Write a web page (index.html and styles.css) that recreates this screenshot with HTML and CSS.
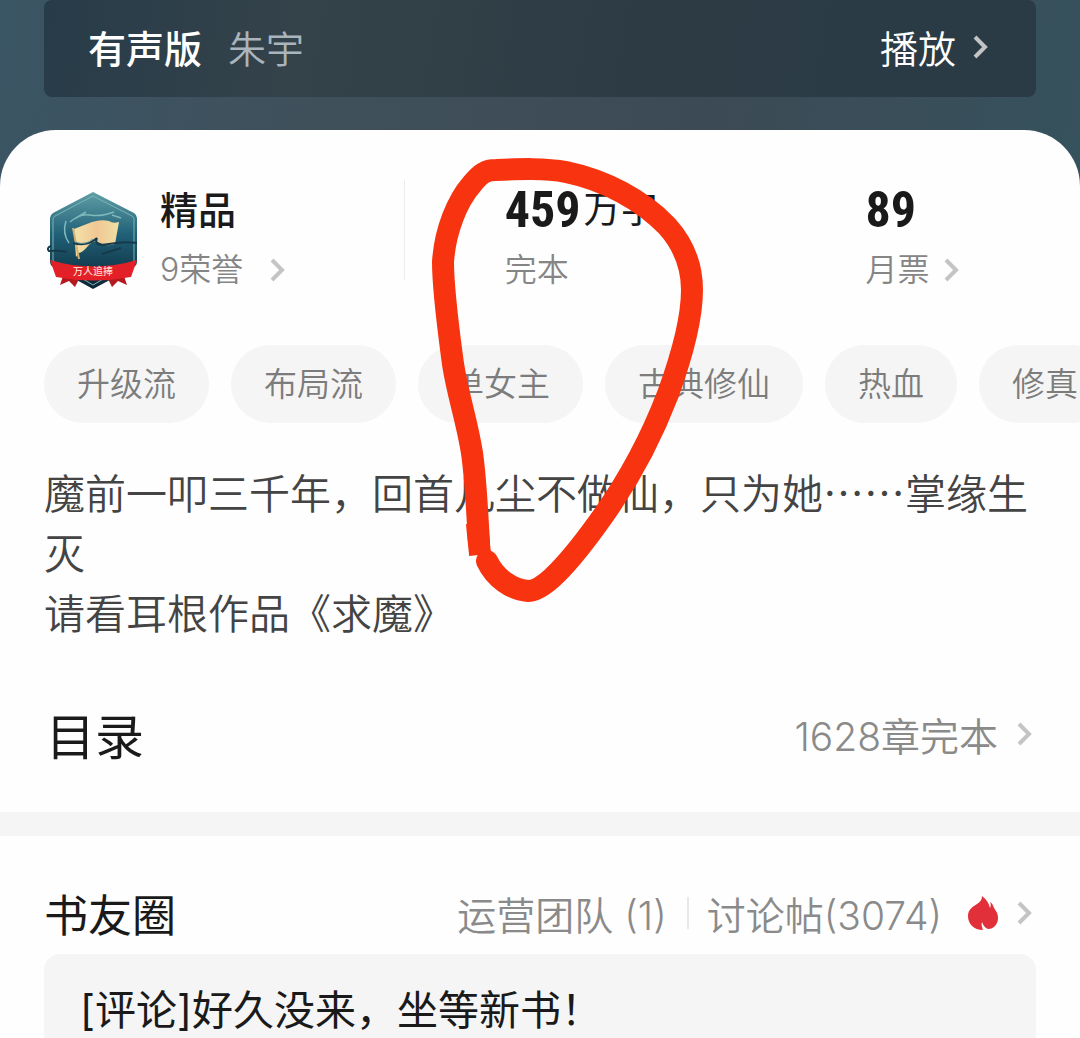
FILE: index.html
```html
<!DOCTYPE html>
<html lang="zh-CN">
<head>
  <meta charset="UTF-8" />
  <meta name="viewport" content="width=device-width, initial-scale=1" />
  <title>求魔</title>
  <link rel="stylesheet" href="styles.css">
</head>
<body>
  <header class="hero">
    <div class="audio-bar">
      <span class="audio-title">有声版</span>
      <span class="audio-author">朱宇</span>
      <a href="#play" class="audio-play">播放
        <svg class="chevron" viewBox="0 0 16 26"><path d="M3 3l10 10L3 23" /></svg>
      </a>
    </div>
  </header>

  <main class="panel">
    <section class="stats">
      <a href="#honor" class="stat honor">
        <svg class="badge" viewBox="-2 0 94 100">
          <defs>
            <linearGradient id="shield" x1="0" y1="0" x2="0" y2="1">
              <stop offset="0" stop-color="#5f9fa6" />
              <stop offset="0.45" stop-color="#1f5f76" />
              <stop offset="1" stop-color="#0c2534" />
            </linearGradient>
            <linearGradient id="flag" x1="0" y1="0" x2="1" y2="0">
              <stop offset="0" stop-color="#f3e3a8" />
              <stop offset="0.5" stop-color="#f0c795" />
              <stop offset="1" stop-color="#efe0a2" />
            </linearGradient>
          </defs>
          <path d="M47 1l41 21q3 2 3 5v44q0 3-3 5L47 98 7 76q-3-2-3-5V27q0-3 3-5z" fill="url(#shield)" />
          <path d="M47 5l39 20q2 1 2 3v42L47 94 7 70V28q0-2 2-3z" fill="none" stroke="#7fb3b5" stroke-width="1" />
          <path d="M24 31q10-9 20-7t24-3M20 30q-4 12 3 22M30 27l10-6M66 24l9 3" fill="none" stroke="#7fb9bc" stroke-width="1.5" />
          <path d="M28 38l18-7q9-3 17-1 4 3 10 1l-4 22q-9 3-15-1t-12 3-9 7l-3 4z" fill="url(#flag)" />
          <path d="M27 37l6 31" stroke="#d3b274" stroke-width="2" />
          <path d="M21 61q-8-2-18-1-3-3 2-5M27 52q14 4 24-5-4 9 12 6t28-1M56 63l19-6" fill="none" stroke="#173a4b" stroke-width="2" />
          <path d="M29 51q11 4 18-3" fill="none" stroke="#5f9499" stroke-width="1" />
          <path d="M19 79l-5 15 9-4 6 6 6-12zM76 79l5 15-9-4-6 6-6-12z" fill="#b51920" />
          <path d="M4 69q43 13 87 0l-6 17q-38 7-75 0z" fill="#e32027" />
          <text class="badge-text" x="47" y="84" text-anchor="middle">万人追捧</text>
        </svg>
        <span class="honor-text">
          <strong class="honor-name">精品</strong>
          <span class="stat-label">9荣誉
            <svg class="chevron" viewBox="0 0 16 26"><path d="M3 3l10 10L3 23" /></svg>
          </span>
        </span>
      </a>
      <div class="stat">
        <div class="stat-value"><b class="stat-number">459</b>万字</div>
        <div class="stat-label">完本</div>
      </div>
      <a href="#ticket" class="stat">
        <div class="stat-value"><b class="stat-number">89</b></div>
        <div class="stat-label ticket">月票
          <svg class="chevron" viewBox="0 0 16 26"><path d="M3 3l10 10L3 23" /></svg>
        </div>
      </a>
    </section>

    <nav class="tags">
      <a href="#tag1" class="tag">升级流</a>
      <a href="#tag2" class="tag">布局流</a>
      <a href="#tag3" class="tag">单女主</a>
      <a href="#tag4" class="tag">古典修仙</a>
      <a href="#tag5" class="tag">热血</a>
      <a href="#tag6" class="tag">修真</a>
    </nav>

    <p class="intro">魔前一叩三千年，回首凡尘不做仙，只为她……掌缘生灭<br>请看耳根作品《求魔》</p>

    <section class="catalog">
      <h2 class="catalog-title">目录</h2>
      <a href="#catalog" class="more">1628章完本
        <svg class="chevron" viewBox="0 0 16 26"><path d="M3 3l10 10L3 23" /></svg>
      </a>
    </section>

    <section class="circle">
      <div class="circle-head">
        <h2 class="circle-title">书友圈</h2>
        <div class="circle-links">
          <a href="#team" class="more">运营团队 (1)</a>
          <a href="#posts" class="more posts">讨论帖(3074)
            <svg class="fire" viewBox="0 0 30 34"><path d="M14 0c4 3 7 7 8 12 1-2 1-4 0-6 2 1 3 3 4 6 2 3 4 5 4 10 0 6-4 11-10 11-3-1-5-4-6-7-1 3 0 5 1 8C6 34 0 28 0 20 0 14 4 11 9 8c3-2 5-4 5-8z" /></svg>
            <svg class="chevron" viewBox="0 0 16 26"><path d="M3 3l10 10L3 23" /></svg>
          </a>
        </div>
      </div>
      <article class="comment">[评论]好久没来，坐等新书！</article>
    </section>

    <!-- hand-drawn ring round the word count -->
    <svg class="ring" viewBox="0 0 280 450">
      <path d="M49 386C47 355 46 325 42 297C37 265 28 240 23 208C18 170 13 135 13 106C15 75 27 45 42 28C51 17 56 14 66 14C90 13 115 12 136 16C175 24 212 44 237 70C255 90 262 112 262 134C262 165 250 205 238 238C220 285 195 330 168 367C150 392 135 410 122 422C112 431 104 435 98 435C82 434 65 422 57 405" />
      <path class="ring-tip" d="M48 378l1 10" />
    </svg>
  </main>
</body>
</html>
```
FILE: styles.css
```css
* {
  box-sizing: border-box;
}
body {
  margin: 0;
  min-height: 100vh;
  display: flex;
  flex-direction: column;
  font-family: Inter, "Noto Sans CJK SC", sans-serif;
  font-weight: 350;
  color: #1a1a1a;
  background: linear-gradient(100deg, #3a5564 0, #40505b 30%, #3c4a55 65%, #36525d 100%) no-repeat;
  background-size: 100% 220px;
  overflow-x: hidden;
}
a {
  color: inherit;
  text-decoration: none;
}
h2 {
  margin: 0;
}
.hero {
  padding: 0 44px 33px;
}
.audio-bar {
  display: flex;
  align-items: center;
  height: 97px;
  padding: 0 48px 4px 44px;
  border-radius: 8px;
  background: linear-gradient(100deg, #273c49 0, #34424a 25%, #2d3b44 60%, #2a3b46 100%);
  font-size: 38px;
  color: #fff;
}
.audio-title {
  font-weight: 500;
}
.audio-author {
  margin-left: 26px;
  color: #a9b4bd;
}
.audio-play {
  display: flex;
  align-items: center;
  gap: 16px;
  margin-left: auto;
}
.chevron {
  flex: none;
  width: 16px;
  height: 26px;
  fill: none;
  stroke: #c4c4c4;
  stroke-width: 4;
}
.panel {
  position: relative;
  flex: 1;
  display: flex;
  flex-direction: column;
  padding-top: 50px;
  border-radius: 56px 56px 0 0;
  background: #fefefe;
}
.stats {
  display: grid;
  grid-template-columns: 4fr 4fr 3fr;
  margin: 0 44px;
  height: 120px;
}
.stat {
  padding-left: 100px;
}
.honor {
  display: flex;
  gap: 22px;
  height: 100px;
  padding-left: 0;
  border-right: 1px solid #ececec;
}
.badge {
  width: 94px;
  height: 100px;
  margin-top: 11px;
}
.badge-text {
  font-size: 10px;
  font-weight: 500;
  fill: #ffd9c8;
}
.honor-name {
  display: block;
  font-size: 38px;
  line-height: 60px;
  font-weight: 500;
}
.stat-value {
  display: flex;
  align-items: center;
  gap: 3px;
  font-size: 37px;
  line-height: 60px;
  font-weight: 400;
}
.stat-number {
  font-family: "Roboto Condensed", Roboto, sans-serif;
  font-size: 50px;
  font-weight: 700;
}
.stat-label {
  display: flex;
  align-items: center;
  gap: 26px;
  font-size: 32px;
  line-height: 60px;
  color: #858585;
}
.ticket {
  gap: 14px;
}
.tags {
  display: flex;
  gap: 22px;
  margin-top: 45px;
  padding-left: 44px;
  overflow: hidden;
}
.tag {
  flex: none;
  padding: 0 33px;
  border-radius: 39px;
  background: #f5f5f5;
  font-size: 33px;
  line-height: 78px;
  color: #7c7c7c;
}
.intro {
  margin: 38px 44px 0;
  font-family: "Noto Sans CJK SC", sans-serif;
  font-size: 41px;
  line-height: 60px;
  color: #444;
}
.catalog {
  display: flex;
  align-items: center;
  justify-content: space-between;
  height: 195px;
  padding: 14px 48px 0 46px;
  border-bottom: 24px solid #f5f5f5;
}
.catalog-title {
  font-size: 49px;
  font-weight: 400;
}
.more {
  display: flex;
  align-items: center;
  gap: 18px;
  font-size: 39px;
  color: #8a8a8a;
}
.circle {
  flex: 1;
  display: flex;
  flex-direction: column;
}
.circle-head {
  display: flex;
  align-items: center;
  justify-content: space-between;
  height: 118px;
  padding: 36px 48px 0 44px;
}
.circle-title {
  font-size: 44px;
  font-weight: 400;
}
.circle-links {
  display: flex;
  align-items: center;
  gap: 20px;
}
.posts {
  position: relative;
  padding-left: 20px;
}
.posts::before {
  content: "";
  position: absolute;
  left: 0;
  width: 2px;
  height: 32px;
  background: #e8e8e8;
}
.fire {
  width: 30px;
  height: 34px;
  margin-left: 8px;
  fill: #e2303a;
}
.comment {
  flex: 1;
  margin: 0 44px;
  padding: 28px 36px 0;
  border-radius: 16px 16px 0 0;
  background: #f5f5f5;
  font-size: 41px;
  line-height: 56px;
  font-weight: 400;
}
.ring {
  position: absolute;
  top: 26px;
  left: 430px;
  width: 280px;
  height: 450px;
  fill: none;
  stroke: #f8330f;
  stroke-width: 22;
  stroke-linecap: round;
  stroke-linejoin: round;
  pointer-events: none;
}
.ring-tip {
  stroke-linecap: square;
}
```
